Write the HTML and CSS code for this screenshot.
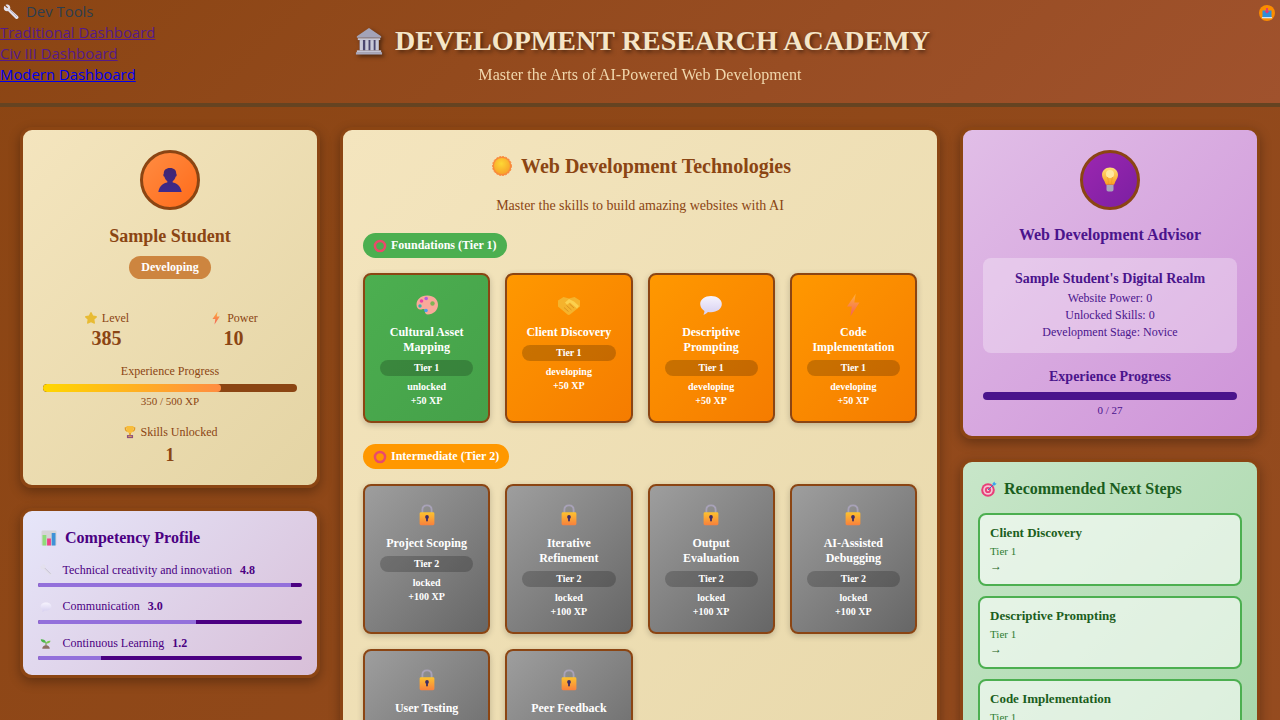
FILE: index.html
```html
<!DOCTYPE html>
<html lang="en">
<head>
<meta charset="utf-8">
<title>Development Research Academy</title>
<link rel="stylesheet" href="styles.css">
</head>
<body>
<svg class="defs" width="0" height="0" aria-hidden="true">
  <defs>
    <linearGradient id="gOrange" x1="0" y1="0" x2="0" y2="1"><stop offset="0" stop-color="#fcc22e"/><stop offset="1" stop-color="#f9803c"/></linearGradient>
    <linearGradient id="gBolt" x1="0" y1="0" x2="0" y2="1"><stop offset="0" stop-color="#ffb13b"/><stop offset="1" stop-color="#f2605a"/></linearGradient>
    <linearGradient id="gPerson" x1="0" y1="0" x2="0" y2="1"><stop offset="0" stop-color="#43256f"/><stop offset="1" stop-color="#3d2a8c"/></linearGradient>
    <linearGradient id="gBulb" x1="0" y1="0" x2="0" y2="1"><stop offset="0" stop-color="#ffe07a"/><stop offset="1" stop-color="#fb9f1e"/></linearGradient>
    <linearGradient id="gBubble" x1="0" y1="0" x2="0" y2="1"><stop offset="0" stop-color="#f6f3fd"/><stop offset="1" stop-color="#d6cff0"/></linearGradient>
    <radialGradient id="gSun" cx=".45" cy=".35" r=".7"><stop offset="0" stop-color="#fdd835"/><stop offset="1" stop-color="#f8a028"/></radialGradient>
    <symbol id="i-wrench" viewBox="0 0 16 16"><path d="M1.500 1.800 4.200 4.300 5 3.500 2.500.9C4.300.1 6.300.800 7 2.400c.4.900.4 1.700.1 2.500l7.800 7.200c.8.800.8 1.800.1 2.500-.7.700-1.800.6-2.500-.1L5 6.900c-.9.400-2 .3-2.900-.2C.6 5.800.4 3.400 1.500 1.800z" fill="#e3e0ec"/><path d="M6.500 5.500 14 13" stroke="#b9b3c9" stroke-width="1" fill="none"/></symbol>
    <symbol id="i-temple" viewBox="0 0 30 30"><path d="M15 1 28 10v1.500H2V10z" fill="#a3a3b8"/><path d="M3 12h24v2H3z" fill="#c5c5d4"/><path d="M5 14h20v11H5z" fill="#4a4670"/><g fill="#c9c9d9"><rect x="5" y="14" width="3.500" height="11"/><rect x="11" y="14" width="3.500" height="11"/><rect x="16.500" y="14" width="3.500" height="11" /><rect x="22" y="14" width="3.500" height="11"/></g><path d="M2 25h26v2.500H2z" fill="#c5c5d4"/><path d="M1 27h28v2.500H1z" fill="#a9a9bd"/></symbol>
    <symbol id="i-person" viewBox="0 0 24 24"><path d="M12 0c4.300 0 6.200 2.300 6.200 5.300 0 .6.500.9.500 1.700 0 1-.6 1.500-1.100 1.700-.5 2.300-1.800 3.700-2.900 4.300v1.500c3.600.7 7.800 3 9 9.500H.3c1.200-6.500 5.400-8.800 9-9.500V13c-1.100-.6-2.400-2-2.900-4.300C5.900 8.500 5.300 8 5.300 7c0-.8.500-1.100.5-1.700C5.800 2.300 7.700 0 12 0z" fill="url(#gPerson)"/></symbol>
    <symbol id="i-sun" viewBox="0 0 20 20"><circle cx="10" cy="10" r="9.500" fill="#f98a3b" stroke="#f98a3b" stroke-dasharray="1.800 1.400"/><circle cx="10" cy="10" r="8" fill="url(#gSun)"/></symbol>
    <symbol id="i-star" viewBox="0 0 16 16"><path d="M8 1.200c.4 0 .7.300.9.700l1.500 3.200 3.500.5c.9.100 1.200 1.100.6 1.700l-2.600 2.500.6 3.500c.2.900-.7 1.500-1.500 1.100L8 12.800l-3 1.600c-.8.400-1.700-.2-1.500-1.100l.6-3.500-2.600-2.500c-.6-.6-.3-1.600.6-1.700l3.500-.5 1.500-3.200c.2-.4.500-.7.900-.7z" fill="#e8bb33"/></symbol>
    <symbol id="i-bolt" viewBox="0 0 16 16"><path d="M9.800.5 4 9h3.200L6.300 15.500 12.300 6.400H8.900z" fill="url(#gBolt)"/></symbol>
    <symbol id="i-trophy" viewBox="0 0 16 16"><path d="M2 2.500h12v1.800c0 2-1.300 3.200-3 3.400l-.5-1.200c1-.2 2-.9 2-2.200V3.700H3.500v.6c0 1.300 1 2 2 2.200L5 7.700C3.300 7.500 2 6.300 2 4.300z" fill="#e39a22"/><path d="M4 1.200h8v4c0 2.500-1.700 4-4 4s-4-1.500-4-4z" fill="#f8bd3a"/><path d="M7 9h2v2.500H7z" fill="#e39a22"/><path d="M4.500 11.500h7V15h-7z" fill="#8f4f7d"/><path d="M6 12.500h4v1H6z" fill="#e8b04a"/></symbol>
    <symbol id="i-chart" viewBox="0 0 16 16"><rect x=".5" y=".5" width="15" height="15" rx="1.200" fill="#d6d3d6"/><rect x="1.500" y="5" width="3.800" height="10.500" fill="#8fdc7a"/><rect x="6.100" y="8.500" width="3.800" height="7" fill="#ef3f86"/><rect x="10.700" y="3" width="3.800" height="12.500" fill="#3f92d8"/></symbol>
    <symbol id="i-bubble" viewBox="0 0 20 20"><path d="M10 2.500c5 0 9 2.700 9 6.700s-4 6.800-9 6.800c-.9 0-1.800-.1-2.600-.2C6.500 17 5 18 3.500 18c.7-.9 1-1.800 1-3.100C2.400 13.600 1 11.600 1 9.200 1 5.200 5 2.500 10 2.500z" fill="url(#gBubble)"/></symbol>
    <symbol id="i-seed" viewBox="0 0 16 16"><path d="M7.400 7h1.200v4.500H7.400z" fill="#5b8c2a"/><path d="M8 7.500C7.500 4 4.500 2.800 1 3c.3 3.300 3 5.200 7 4.500z" fill="#4cb648"/><path d="M8 8.500c.2-2.600 2.500-3.800 6-3.500-.5 2.700-2.600 4-6 3.500z" fill="#7ac74f"/><path d="M3 15.500c0-2.800 2.200-4.500 5-4.500s5 1.700 5 4.500z" fill="#8d6e63"/></symbol>
    <symbol id="i-ring" viewBox="0 0 16 16"><circle cx="8" cy="8" r="5.800" fill="none" stroke="#ea4a6a" stroke-width="2.800"/></symbol>
    <symbol id="i-palette" viewBox="0 0 24 24"><path d="M12 2.500C5.800 2.500 1.500 6.500 1.500 11.500c0 3.200 1.900 5 3.800 5 1.400 0 2.200-.5 3.200-.5 1.600 0 1.600 1.300 1.500 2.600-.2 1.700.9 2.900 2.700 2.900 5.800 0 10.300-4.400 10.300-9.800 0-5.300-4.500-9.200-10.500-9.200z" fill="#f9a99a"/><circle cx="6.500" cy="8" r="1.800" fill="#e944a3"/><circle cx="11.200" cy="5.500" r="1.800" fill="#b35ce0"/><circle cx="5" cy="13" r="1.700" fill="#32b4b0"/><circle cx="11" cy="17.500" r="1.800" fill="#4a9ef0"/><circle cx="17.500" cy="10.500" r="2.200" fill="#7fb455"/></symbol>
    <symbol id="i-hands" viewBox="0 0 24 24"><path d="M1 7.500 6.500 4l5.500 1.500L17.500 4 23 7.500v6L13 21.500c-.9.600-1.900.5-2.800-.2L1 13.500z" fill="#f5b32c"/><path d="M8 9.500 12 6l5 2.500L22 13l-2 2.500-7-6-3 2.300z" fill="#fcd04e"/><path d="M7 14.500l4.500 4M9.500 12.500l5 4.500M12.500 11l4.500 4" stroke="#dd9320" stroke-width="1" fill="none"/></symbol>
    <symbol id="i-lock" viewBox="-1 0 22 26"><path d="M5 11V6.500C5 3.500 7 1.500 10 1.500s5 2 5 5V11" fill="none" stroke="#a8a2b8" stroke-width="2"/><rect x="2" y="9" width="16" height="14" rx="1.500" fill="url(#gOrange)"/><circle cx="10" cy="14" r="2" fill="#3d2b63"/><rect x="9" y="14" width="2" height="5" rx="1" fill="#3d2b63"/></symbol>
    <symbol id="i-bulb" viewBox="0 0 20 28"><path d="M10 1.500c-4.800 0-8 3.400-8 7.500 0 3.500 2.500 5.300 3.400 8.500.2.800.6 1.300 1.300 1.300h6.600c.7 0 1.100-.5 1.300-1.300C15.500 14.300 18 12.500 18 9c0-4.100-3.200-7.500-8-7.500z" fill="url(#gBulb)"/><circle cx="10" cy="8" r="4" fill="#ffe9a0"/><path d="M7.500 11c.5 2 1 4 1 7M12.500 11c-.5 2-1 4-1 7" stroke="#ee9b28" stroke-width=".7" fill="none"/><path d="M6.500 19h7v4.500c0 1-.8 2-1.800 2h-3.400c-1 0-1.800-1-1.800-2z" fill="#a9a7bb"/></symbol>
    <symbol id="i-target" viewBox="0 0 16 16"><circle cx="7" cy="9" r="6.800" fill="#e83e78"/><circle cx="7" cy="9" r="4.800" fill="#f4c6d4"/><circle cx="7" cy="9" r="3.100" fill="#e83e78"/><circle cx="7" cy="9" r="1.200" fill="#f4c6d4"/><path d="M7 9 13 3" stroke="#3b78c2" stroke-width="1"/><path d="M11.500 2.500 13.500.5l.5 1.700 1.700.4-2 2-1.800-.4z" fill="#38a4ee"/></symbol>
    <symbol id="i-ext" viewBox="0 0 16 16"><circle cx="8" cy="8" r="8" fill="#fb8c00"/><rect x="3.500" y="5.500" width="9" height="6.500" fill="#2f8fd8"/><path d="M3 12h10v1.300H3z" fill="#cfe3f5"/><path d="M7 3h2v3h1.500L8 8.800 5.500 6H7z" fill="#e53a6e"/></symbol>
  </defs>
</svg>

<header class="site-header">
  <nav class="dev-tools">
    <div class="dev-label"><svg class="ic ic-wrench"><use href="#i-wrench"/></svg><span>Dev Tools</span></div>
    <a class="dev-link visited" href="#a">Traditional Dashboard</a>
    <a class="dev-link visited" href="#b">Civ III Dashboard</a>
    <a class="dev-link" href="#c">Modern Dashboard</a>
  </nav>
  <svg class="ext-badge"><use href="#i-ext"/></svg>
  <h1 class="site-title"><svg class="ic-temple"><use href="#i-temple"/></svg><span>DEVELOPMENT RESEARCH ACADEMY</span></h1>
  <p class="site-sub">Master the Arts of AI-Powered Web Development</p>
</header>

<main class="layout">
  <aside class="col">
    <section class="card student">
      <div class="avatar avatar-orange"><svg class="ic-person"><use href="#i-person"/></svg></div>
      <h2 class="student-name">Sample Student</h2>
      <span class="level-badge">Developing</span>
      <div class="stats">
        <div class="stat">
          <div class="stat-label"><svg class="ic ic-s"><use href="#i-star"/></svg>Level</div>
          <div class="stat-value">385</div>
        </div>
        <div class="stat">
          <div class="stat-label"><svg class="ic ic-s"><use href="#i-bolt"/></svg>Power</div>
          <div class="stat-value">10</div>
        </div>
      </div>
      <div class="xp-label">Experience Progress</div>
      <div class="xp-track"><div class="xp-fill" style="width:70%"></div></div>
      <div class="xp-text">350 / 500 XP</div>
      <div class="unlocked-label"><svg class="ic ic-s"><use href="#i-trophy"/></svg>Skills Unlocked</div>
      <div class="unlocked-value">1</div>
    </section>

    <section class="card competency">
      <h3 class="comp-title"><svg class="ic ic-title"><use href="#i-chart"/></svg>Competency Profile</h3>
      <div class="comp-row">
        <div class="comp-label"><svg class="ic ic-comp"><use href="#i-wrench"/></svg><span>Technical creativity and innovation</span><b>4.8</b></div>
        <div class="comp-track"><div class="comp-fill" style="width:96%"></div></div>
      </div>
      <div class="comp-row">
        <div class="comp-label"><svg class="ic ic-comp"><use href="#i-bubble"/></svg><span>Communication</span><b>3.0</b></div>
        <div class="comp-track"><div class="comp-fill" style="width:60%"></div></div>
      </div>
      <div class="comp-row">
        <div class="comp-label"><svg class="ic ic-comp"><use href="#i-seed"/></svg><span>Continuous Learning</span><b>1.2</b></div>
        <div class="comp-track"><div class="comp-fill" style="width:24%"></div></div>
      </div>
    </section>
  </aside>

  <section class="card center">
    <h2 class="center-title"><svg class="ic-sun"><use href="#i-sun"/></svg>Web Development Technologies</h2>
    <p class="center-sub">Master the skills to build amazing websites with AI</p>

    <div class="tier-pill tier-green"><svg class="ic ic-ring"><use href="#i-ring"/></svg>Foundations (Tier 1)</div>
    <div class="skills">
      <article class="skill unlocked">
        <svg class="skill-icon"><use href="#i-palette"/></svg>
        <h4 class="skill-name">Cultural Asset Mapping</h4>
        <div class="skill-tier">Tier 1</div>
        <div class="skill-meta">unlocked</div>
        <div class="skill-meta">+50 XP</div>
      </article>
      <article class="skill developing">
        <svg class="skill-icon"><use href="#i-hands"/></svg>
        <h4 class="skill-name">Client Discovery</h4>
        <div class="skill-tier">Tier 1</div>
        <div class="skill-meta">developing</div>
        <div class="skill-meta">+50 XP</div>
      </article>
      <article class="skill developing">
        <svg class="skill-icon"><use href="#i-bubble"/></svg>
        <h4 class="skill-name">Descriptive Prompting</h4>
        <div class="skill-tier">Tier 1</div>
        <div class="skill-meta">developing</div>
        <div class="skill-meta">+50 XP</div>
      </article>
      <article class="skill developing">
        <svg class="skill-icon"><use href="#i-bolt"/></svg>
        <h4 class="skill-name">Code Implementation</h4>
        <div class="skill-tier">Tier 1</div>
        <div class="skill-meta">developing</div>
        <div class="skill-meta">+50 XP</div>
      </article>
    </div>

    <div class="tier-pill tier-orange"><svg class="ic ic-ring"><use href="#i-ring"/></svg>Intermediate (Tier 2)</div>
    <div class="skills">
      <article class="skill locked">
        <svg class="skill-icon"><use href="#i-lock"/></svg>
        <h4 class="skill-name">Project Scoping</h4>
        <div class="skill-tier">Tier 2</div>
        <div class="skill-meta">locked</div>
        <div class="skill-meta">+100 XP</div>
      </article>
      <article class="skill locked">
        <svg class="skill-icon"><use href="#i-lock"/></svg>
        <h4 class="skill-name">Iterative Refinement</h4>
        <div class="skill-tier">Tier 2</div>
        <div class="skill-meta">locked</div>
        <div class="skill-meta">+100 XP</div>
      </article>
      <article class="skill locked">
        <svg class="skill-icon"><use href="#i-lock"/></svg>
        <h4 class="skill-name">Output Evaluation</h4>
        <div class="skill-tier">Tier 2</div>
        <div class="skill-meta">locked</div>
        <div class="skill-meta">+100 XP</div>
      </article>
      <article class="skill locked">
        <svg class="skill-icon"><use href="#i-lock"/></svg>
        <h4 class="skill-name">AI-Assisted Debugging</h4>
        <div class="skill-tier">Tier 2</div>
        <div class="skill-meta">locked</div>
        <div class="skill-meta">+100 XP</div>
      </article>
      <article class="skill locked">
        <svg class="skill-icon"><use href="#i-lock"/></svg>
        <h4 class="skill-name">User Testing</h4>
        <div class="skill-tier">Tier 2</div>
        <div class="skill-meta">locked</div>
        <div class="skill-meta">+100 XP</div>
      </article>
      <article class="skill locked">
        <svg class="skill-icon"><use href="#i-lock"/></svg>
        <h4 class="skill-name">Peer Feedback</h4>
        <div class="skill-tier">Tier 2</div>
        <div class="skill-meta">locked</div>
        <div class="skill-meta">+100 XP</div>
      </article>
    </div>
  </section>

  <aside class="col">
    <section class="card advisor">
      <div class="avatar avatar-purple"><svg class="ic-bulb"><use href="#i-bulb"/></svg></div>
      <h2 class="advisor-title">Web Development Advisor</h2>
      <div class="realm">
        <h3 class="realm-title">Sample Student's Digital Realm</h3>
        <div class="realm-line">Website Power: 0</div>
        <div class="realm-line">Unlocked Skills: 0</div>
        <div class="realm-line">Development Stage: Novice</div>
      </div>
      <h3 class="adv-xp-title">Experience Progress</h3>
      <div class="adv-track"></div>
      <div class="adv-text">0 / 27</div>
    </section>

    <section class="card next">
      <h3 class="next-title"><svg class="ic ic-title"><use href="#i-target"/></svg>Recommended Next Steps</h3>
      <div class="next-item">
        <div class="next-name">Client Discovery</div>
        <div class="next-tier">Tier 1</div>
        <div class="next-arrow">→</div>
      </div>
      <div class="next-item">
        <div class="next-name">Descriptive Prompting</div>
        <div class="next-tier">Tier 1</div>
        <div class="next-arrow">→</div>
      </div>
      <div class="next-item">
        <div class="next-name">Code Implementation</div>
        <div class="next-tier">Tier 1</div>
        <div class="next-arrow">→</div>
      </div>
    </section>
  </aside>
</main>
</body>
</html>
```
FILE: styles.css
```css
* { box-sizing: border-box; }
html { height: 720px; overflow: hidden; }
body {
  margin: 0;
  font-family: "Liberation Serif", "Times New Roman", serif;
  background: linear-gradient(135deg, #8b4513, #a0522d) no-repeat;
  background-size: 100% 3000px;
  min-height: 720px;
  color: #8b4513;
}
.defs { position: absolute; }
h1, h2, h3, h4, p { margin: 0; }
.ic { display: inline-block; vertical-align: middle; flex: none; }

.site-header {
  position: relative;
  height: 107px;
  padding-top: 21px;
  text-align: center;
  background: linear-gradient(135deg, #8b4513, #a0522d);
  border-bottom: 4px solid #654321;
}
.dev-tools {
  position: absolute;
  top: 1px;
  left: 0;
  display: flex;
  flex-direction: column;
  align-items: flex-start;
  font-family: "Open Sans", "Noto Sans", sans-serif;
  font-size: 14.9px;
  line-height: 21px;
}
.dev-label { display: flex; align-items: center; color: #2c3e50; }
.ic-wrench { width: 16px; height: 16px; margin: 0 7px 0 3px; }
.dev-link { color: #0000ee; }
.dev-link.visited { color: #551a8b; }
.ext-badge { position: absolute; top: 5px; right: 5px; width: 16px; height: 16px; }

.site-title {
  display: flex;
  justify-content: center;
  align-items: center;
  gap: 12px;
  height: 40px;
  padding-left: 5px;
  font-size: 28px;
  font-weight: bold;
  line-height: 40px;
  letter-spacing: .07px;
  color: #f5e6c8;
  text-shadow: 2px 2px 4px rgba(0, 0, 0, .5);
}
.ic-temple { width: 28px; height: 30px; filter: drop-shadow(2px 2px 2px rgba(0, 0, 0, .5)); }
.site-sub { margin-top: 5px; font-size: 16px; line-height: 18px; letter-spacing: .07px; color: #f5deb3; opacity: .95; }

.layout {
  display: grid;
  grid-template-columns: 300px 1fr 300px;
  gap: 20px;
  align-items: start;
  padding: 20px;
}
.col { display: flex; flex-direction: column; gap: 20px; }
.card {
  border: 3px solid #8b4513;
  border-radius: 12px;
  box-shadow: 0 4px 12px rgba(0, 0, 0, .3);
  background: linear-gradient(135deg, #f4e5be, #e4d4a4);
}

/* student */
.student { padding: 20px; text-align: center; }
.avatar {
  width: 60px;
  height: 60px;
  margin: 0 auto;
  border: 3px solid #8b4513;
  border-radius: 50%;
  display: flex;
  align-items: center;
  justify-content: center;
}
.avatar-orange { background: linear-gradient(135deg, #ff8c42, #ff6b1a); }
.avatar-purple { background: linear-gradient(135deg, #9c27b0, #7b1fa2); }
.ic-person { width: 24px; height: 24px; }
.ic-bulb { width: 20px; height: 28px; }
.student-name { margin-top: 16px; font-size: 18px; line-height: 20px; }
.level-badge {
  display: inline-block;
  margin-top: 10px;
  padding: 0 12px;
  height: 23px;
  line-height: 23px;
  font-size: 12px;
  font-weight: bold;
  color: #fff;
  background: #cd853f;
  border-radius: 12px;
}
.stats { display: grid; grid-template-columns: 1fr 1fr; margin-top: 31px; }
.stat-label { font-size: 12px; line-height: 17px; }
.ic-s { width: 14px; height: 14px; margin-right: 4px; margin-top: -2px; }
.stat-value { font-size: 20px; font-weight: bold; line-height: 23px; }
.xp-label { margin-top: 14px; font-size: 12px; line-height: 14px; }
.xp-track { height: 8px; margin-top: 6px; background: #8b4513; border-radius: 4px; overflow: hidden; }
.xp-fill { height: 100%; background: linear-gradient(90deg, #ffd700, #ff8c42); border-radius: 4px; }
.xp-text { margin-top: 3px; font-size: 11px; line-height: 12px; }
.unlocked-label { margin-top: 17px; font-size: 12px; line-height: 17px; }
.unlocked-value { margin-top: 4px; font-size: 18px; font-weight: bold; line-height: 20px; }

/* competency */
.competency { padding: 15px; background: linear-gradient(135deg, #e6e6fa, #d8bfd8); color: #4b0082; }
.comp-title { display: flex; align-items: center; font-size: 16px; line-height: 24.5px; }
.ic-title { width: 16px; height: 16px; margin: 0 8px 0 3px; }
.comp-row { margin-top: 11px; }
.comp-label { display: flex; align-items: center; font-size: 12px; line-height: 17px; }
.comp-label b { margin-left: 8px; }
.ic-comp { width: 12px; height: 12px; margin: 0 10.5px 0 2px; }
.comp-track { height: 4px; margin-top: 4.5px; background: #4b0082; border-radius: 2px; overflow: hidden; }
.comp-fill { height: 100%; background: #9370db; }

/* center */
.center {
  padding: 20px;
  background-size: 100% 1100px;
  background-repeat: no-repeat;
  background-color: #e4d4a4;
}
.center-title {
  display: flex;
  justify-content: center;
  align-items: center;
  gap: 9px;
  margin-top: 5px;
  padding-left: 3px;
  font-size: 20px;
  line-height: 22px;
}
.ic-sun { width: 20px; height: 20px; }
.center-sub { margin-top: 21px; text-align: center; font-size: 14px; line-height: 16px; }
.tier-pill {
  display: flex;
  align-items: center;
  width: fit-content;
  height: 25px;
  margin-top: 19px;
  padding: 0 10px;
  border-radius: 13px;
  font-size: 12px;
  font-weight: bold;
  color: #fff;
}
.ic-ring { width: 14px; height: 14px; margin-right: 4px; }
.tier-green { background: #4caf50; }
.tier-orange { background: #ff9800; margin-top: 21px; }
.skills {
  display: grid;
  grid-template-columns: repeat(4, 1fr);
  gap: 15px;
  margin-top: 15px;
}
.skill {
  padding: 18px 15px 13px;
  border: 2px solid #8b4513;
  border-radius: 8px;
  color: #fff;
  text-align: center;
  box-shadow: 0 2px 6px rgba(0, 0, 0, .2);
}
.unlocked { background: linear-gradient(135deg, #4caf50, #45a049); }
.developing { background: linear-gradient(135deg, #ff9800, #f57c00); }
.locked { background: linear-gradient(135deg, #9e9e9e, #666); }
.skill-icon { display: block; width: 24px; height: 24px; margin: 0 auto 8px; }
.skill-name { font-size: 12px; line-height: 15px; }
.skill-tier {
  margin: 5px 0 4px;
  height: 16px;
  line-height: 16px;
  font-size: 10px;
  font-weight: bold;
  background: rgba(0, 0, 0, .2);
  border-radius: 8px;
}
.skill-meta { font-size: 10px; font-weight: bold; line-height: 14px; }

/* advisor */
.advisor {
  padding: 20px;
  text-align: center;
  color: #4a148c;
  background: linear-gradient(135deg, #e1bee7, #ce93d8);
}
.advisor-title { margin-top: 15px; font-size: 16px; line-height: 20px; }
.realm { margin-top: 13px; padding: 13px 10px 12px; background: rgba(255, 255, 255, .3); border-radius: 8px; }
.realm-title { font-size: 14px; line-height: 16px; margin-bottom: 3px; }
.realm-line { font-size: 12px; line-height: 17px; }
.adv-xp-title { margin-top: 16px; font-size: 14px; line-height: 16px; }
.adv-track { height: 8px; margin-top: 7px; background: #4a148c; border-radius: 4px; }
.adv-text { margin-top: 4px; font-size: 11px; line-height: 12px; }

/* next */
.next { padding: 15px; color: #1b5e20; background: linear-gradient(135deg, #c8e6c9, #a5d6a7); }
.next-title { display: flex; align-items: center; font-size: 16px; line-height: 24px; margin-bottom: 12px; }
.next-title .ic-title { margin-right: 7px; }
.next-item {
  padding: 10px;
  margin-bottom: 10px;
  border: 2px solid #4caf50;
  border-radius: 8px;
  background: rgba(255, 255, 255, .6);
}
.next-name { font-size: 13px; font-weight: bold; line-height: 15px; }
.next-tier { margin-top: 5px; font-size: 11px; line-height: 13px; color: #2e7d32; }
.next-arrow { font-size: 12px; font-weight: bold; line-height: 16px; }
```
